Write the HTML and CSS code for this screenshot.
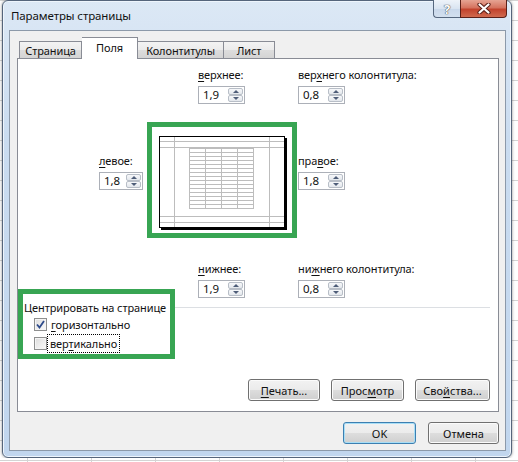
FILE: index.html
```html
<!DOCTYPE html>
<html lang="ru">
<head>
  <meta charset="UTF-8">
  <title>Параметры страницы</title>
  <link rel="stylesheet" href="styles.css">
</head>
<body>

<div class="window">
  <div class="titlebar">
    <span class="title">Параметры страницы</span>
    <div class="caption-buttons">
      <span class="cap-btn help">?</span>
      <span class="cap-btn close">
        <svg width="14" height="11" viewBox="0 0 14 11">
          <path d="M2.5 1.5 L11.5 9.5 M11.5 1.5 L2.5 9.5" stroke="#5b2018" stroke-width="4.2" stroke-linecap="round"/>
          <path d="M2.5 1.5 L11.5 9.5 M11.5 1.5 L2.5 9.5" stroke="#fff" stroke-width="2.2" stroke-linecap="round"/>
        </svg>
      </span>
    </div>
  </div>

  <div class="client">
    <div class="tabs">
      <span class="tab tab-page">Страница</span>
      <span class="tab tab-fields active">Поля</span>
      <span class="tab tab-headers">Колонтитулы</span>
      <span class="tab tab-sheet">Лист</span>
    </div>

    <div class="panel">
      <div class="margins">
        <div class="field f-top">
          <label><u>в</u>ерхнее:</label>
          <div class="spin"><span class="val">1,9</span><span class="arrows"><span class="up"></span><span class="down"></span></span></div>
        </div>
        <div class="field f-header">
          <label>вер<u>х</u>него колонтитула:</label>
          <div class="spin"><span class="val">0,8</span><span class="arrows"><span class="up"></span><span class="down"></span></span></div>
        </div>

        <div class="field f-left">
          <label><u>л</u>евое:</label>
          <div class="spin narrow"><span class="val">1,8</span><span class="arrows"><span class="up"></span><span class="down"></span></span></div>
        </div>
        <div class="preview">
          <svg width="140" height="106" viewBox="0 0 140 106">
            <!-- page shadow -->
            <rect x="9" y="100" width="126" height="3" fill="#000"/>
            <rect x="132" y="11" width="3" height="92" fill="#000"/>
            <!-- margin and header/footer guides -->
            <g stroke="#bdbdbd" stroke-width="1">
              <path d="M22.5 9 V100 M117.5 9 V100"/>
              <path d="M7 14.5 H132 M7 20.5 H132 M7 89.5 H132 M7 95.5 H132"/>
            </g>
            <!-- table -->
            <g stroke="#bdbdbd" stroke-width="1">
              <path d="M37.5 21 V81 M53.5 21 V81 M69.5 21 V81 M85.5 21 V81 M101.5 21 V81"/>
              <path d="M37 21.5 H102 M37 25.5 H102 M37 29.5 H102 M37 33.5 H102 M37 37.5 H102 M37 41.5 H102 M37 45.5 H102 M37 49.5 H102 M37 53.5 H102 M37 57.5 H102 M37 61.5 H102 M37 65.5 H102 M37 69.5 H102 M37 73.5 H102 M37 77.5 H102 M37 81.5 H102"/>
            </g>
            <rect x="7.5" y="9.5" width="125" height="91" fill="none" stroke="#000"/>
          </svg>
        </div>
        <div class="field f-right">
          <label>пра<u>в</u>ое:</label>
          <div class="spin"><span class="val">1,8</span><span class="arrows"><span class="up"></span><span class="down"></span></span></div>
        </div>

        <div class="field f-bottom">
          <label><u>н</u>ижнее:</label>
          <div class="spin"><span class="val">1,9</span><span class="arrows"><span class="up"></span><span class="down"></span></span></div>
        </div>
        <div class="field f-footer">
          <label>ни<u>ж</u>него колонтитула:</label>
          <div class="spin"><span class="val">0,8</span><span class="arrows"><span class="up"></span><span class="down"></span></span></div>
        </div>
      </div>

      <div class="center-group">
        <div class="group-head"><span>Центрировать на странице</span><span class="rule"></span></div>
        <div class="check">
          <span class="box">
            <svg width="9" height="9" viewBox="0 0 9 9"><path d="M1 4.5 L3.5 7.5 L8 1" fill="none" stroke="#2d4a8a" stroke-width="1.8"/></svg>
          </span>
          <span><u>г</u>оризонтально</span>
        </div>
        <div class="check">
          <span class="box"></span>
          <span class="focus">вер<u>т</u>икально</span>
        </div>
      </div>

      <div class="panel-buttons">
        <button class="btn b-print"><u>П</u>ечать...</button>
        <button class="btn b-view">Прос<u>м</u>отр</button>
        <button class="btn b-props">Сво<u>й</u>ства...</button>
      </div>

      <div class="mark"></div>
    </div>

    <div class="dialog-buttons">
      <button class="btn default b-ok">OK</button>
      <button class="btn b-cancel">Отмена</button>
    </div>
  </div>
</div>

</body>
</html>
```

FILE: styles.css
```css
body {
  margin: 0;
  background-color: #fff;
  background-image:
    linear-gradient(90deg, #d4d4d4 1px, transparent 1px),
    linear-gradient(#d4d4d4 1px, transparent 1px);
  background-size: 64px 20px;
  background-position: 27px 0;
  font-family: "Noto Sans", "Open Sans", sans-serif;
  font-size: 11px;
  letter-spacing: -0.1px;
  color: #111;
}

u {
  text-decoration-thickness: 1px;
  text-underline-offset: 2px;
}

/* window frame */
.window {
  width: 510px;
  height: 458px;
  margin-left: 2px;
  box-sizing: border-box;
  border: 1px solid #55657b;
  border-radius: 6px;
  background: linear-gradient(#dce8f5, #cadcf0 30%, #c1d6ee);
  box-shadow: 0 0 3px rgba(0, 0, 0, 0.45), inset 0 0 0 1px #eef5fc;
  display: flex;
  flex-direction: column;
}

.titlebar {
  height: 29px;
  display: flex;
  align-items: flex-start;
}

.title {
  margin: 7px 0 0 8px;
  line-height: 15px;
  font-size: 11.5px;
}

.caption-buttons {
  margin-left: auto;
  margin-right: 4px;
  margin-top: -1px;
  display: flex;
}

.cap-btn {
  height: 18px;
  box-sizing: border-box;
  display: flex;
  align-items: center;
  justify-content: center;
  border: 1px solid #56677e;
  border-top: none;
}

.help {
  width: 27px;
  border-radius: 0 0 0 4px;
  border-right: none;
  background: linear-gradient(#eef3f9, #d9e4f1 50%, #c8d7ea 51%, #d3e0ef);
  color: #fff;
  font-weight: bold;
  font-size: 13px;
  text-shadow: 0 0 1px #333, 0 0 1px #333;
}

.close {
  width: 47px;
  border-radius: 0 0 4px 0;
  border-color: #5b2018;
  background: linear-gradient(#e6a493, #d5735f 45%, #c2432d 55%, #d06a4f);
}

/* client area */
.client {
  flex: 1;
  margin: 0 5px 6px 6px;
  border: 1px solid #8c99a9;
  background: #f0f0f0;
  padding: 6px 6px 0 7px;
  display: flex;
  flex-direction: column;
}

.tabs {
  display: flex;
  align-items: flex-end;
  height: 21px;
  padding-left: 2px;
  position: relative;
  z-index: 1;
}

.tab {
  box-sizing: border-box;
  height: 17px;
  border: 1px solid #898c95;
  border-bottom: none;
  border-left: none;
  background: linear-gradient(#f3f3f3, #ebebeb 50%, #dddddd 51%, #d4d4d4);
  text-align: center;
  line-height: 17px;
}

.tab-page { width: 63px; border-left: 1px solid #898c95; }
.tab-headers { width: 86px; }
.tab-sheet { width: 51px; }

.tab.active {
  width: 56px;
  height: 22px;
  margin-bottom: -1px;
  background: #fff;
  line-height: 20px;
}

.panel {
  position: relative;
  height: 354px;
  box-sizing: border-box;
  border: 1px solid #898c95;
  background: #fff;
  padding: 8px 8px 10px 0;
  display: flex;
  flex-direction: column;
}

/* margin fields around the page preview */
.margins {
  display: grid;
  grid-template-columns: 48px 150px auto;
  margin-left: 81px;
}

.field label {
  display: block;
  line-height: 15px;
  margin-bottom: 4px;
  white-space: nowrap;
}

.f-top, .f-bottom {
  grid-column: 2;
  justify-self: center;
  margin-left: -1px;
}

.f-header, .f-footer, .f-right {
  grid-column: 3;
  margin-left: 1px;
}

.f-left, .f-right {
  align-self: center;
}

.f-bottom, .f-footer {
  margin-top: 23px;
}

.spin {
  display: flex;
  width: 47px;
  height: 18px;
  box-sizing: border-box;
  border: 1px solid #acb0b8;
  background: #fff;
  font-size: 11.5px;
}

.spin.narrow {
  width: 44px;
}

.spin .val {
  flex: 1;
  padding-left: 4px;
  line-height: 16px;
}

.arrows {
  width: 15px;
  padding: 1px 1px 1px 0;
  display: flex;
  flex-direction: column;
}

.arrows span {
  flex: 1;
  border: 1px solid #b8bec7;
  border-radius: 2px;
  background: linear-gradient(#f7f8fa, #e3e7ec);
  display: flex;
  align-items: center;
  justify-content: center;
}

.arrows .up::after {
  content: "";
  border: 3px solid transparent;
  border-top: none;
  border-bottom: 3px solid #4e5d78;
}

.arrows .down::after {
  content: "";
  border: 3px solid transparent;
  border-bottom: none;
  border-top: 3px solid #4e5d78;
}

.preview {
  grid-column: 2;
  width: 150px;
  height: 116px;
  box-sizing: border-box;
  margin-top: 18px;
  border: 5px solid #38a553;
  background: #fff;
}

.preview svg {
  display: block;
}

/* centering options */
.center-group {
  margin: 2px 0 0 6px;
}

.group-head {
  display: flex;
  align-items: center;
  line-height: 15px;
}

.group-head .rule {
  flex: 1;
  margin: 0 0 1px 4px;
  border-top: 1px solid #dcdfe3;
}

.check {
  display: flex;
  align-items: center;
  height: 19px;
  padding-left: 10px;
  gap: 4px;
}

.check:first-of-type {
  margin-top: 2px;
}

.box {
  width: 13px;
  height: 13px;
  box-sizing: border-box;
  border: 1px solid #8e8f8f;
  background: linear-gradient(135deg, #dcdcdc, #fbfbfb);
  box-shadow: inset 0 0 0 1px #f4f4f4;
  display: flex;
  align-items: center;
  justify-content: center;
}

.focus {
  outline: 1px dotted #000;
  outline-offset: 1px;
  padding: 0 1px;
  margin-left: -2px;
}

/* buttons */
.btn {
  height: 22px;
  box-sizing: border-box;
  padding: 0;
  font: inherit;
  color: #111;
  border: 1px solid #707070;
  border-radius: 3px;
  background: linear-gradient(#f2f2f2, #ebebeb 50%, #dddddd 51%, #cfcfcf);
  box-shadow: inset 0 0 0 1px #fbfbfb;
}

.btn.default {
  border-color: #3c7fb1;
  box-shadow: inset 0 0 0 1px #a8def6;
}

.panel-buttons {
  margin-top: auto;
  display: flex;
  justify-content: flex-end;
  gap: 11px;
}

.b-print { width: 72px; }
.b-view { width: 73px; }
.b-props { width: 75px; }

.dialog-buttons {
  margin-top: 10px;
  display: flex;
  justify-content: flex-end;
  gap: 12px;
}

.b-ok { width: 73px; }
.b-cancel { width: 71px; }

/* highlight drawn around the centering options */
.mark {
  position: absolute;
  left: 0;
  top: 230px;
  width: 157px;
  height: 70px;
  box-sizing: border-box;
  border: 5px solid #38a553;
}
```
